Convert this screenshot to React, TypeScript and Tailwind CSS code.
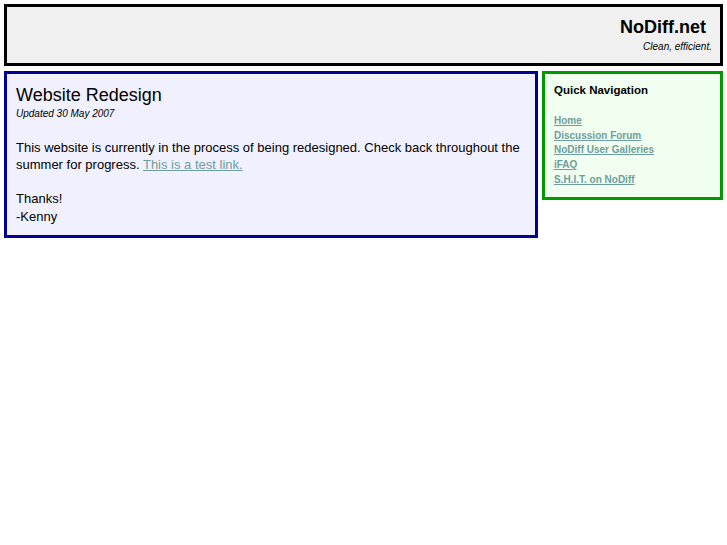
export default function App() {
  return (
    <div className="min-h-screen bg-white p-[4px] text-black" style={{ fontFamily: '"Liberation Sans", Arial, Helvetica, sans-serif' }}>
      <div className="h-[62px] border-[3px] border-black bg-[#f0f0f0] pr-[8px] pt-[10px] text-right">
        <div className="pr-[6px] text-[18px] font-bold leading-[21px]">NoDiff.net</div>
        <div className="mt-[3px] text-[10px] italic leading-[12px]">Clean, efficient.</div>
      </div>
      <div className="mt-[5px] flex items-start gap-[4px]">
        <div className="h-[167px] w-[534px] border-[3px] border-[#000099] bg-[#f0f0ff] px-[9px] pt-[11px]">
          <div className="text-[18px] leading-[21px]">Website Redesign</div>
          <div className="mt-[2px] text-[10px] italic leading-[12px]">Updated 30 May 2007</div>
          <p className="mt-[19px] text-[13px] leading-[17px]">
            This website is currently in the process of being redesigned. Check back throughout the summer for progress.{' '}
            <a href="#" className="text-[#6f9d9d] underline">This is a test link.</a>
          </p>
          <p className="mt-[17px] text-[13px] leading-[17.5px]">
            Thanks!
            <br />
            -Kenny
          </p>
        </div>
        <div className="h-[129px] flex-1 border-[3px] border-[#009900] bg-[#f0fff0] px-[9px] pt-[9px]">
          <div className="text-[11.5px] font-bold leading-[14px]">Quick Navigation</div>
          <div className="mt-[17px] flex flex-col text-[10px] font-bold leading-[14.7px]">
            <a href="#" className="text-[#6f9d9d] underline">Home</a>
            <a href="#" className="text-[#6f9d9d] underline">Discussion Forum</a>
            <a href="#" className="text-[#6f9d9d] underline">NoDiff User Galleries</a>
            <a href="#" className="text-[#6f9d9d] underline">iFAQ</a>
            <a href="#" className="text-[#6f9d9d] underline">S.H.I.T. on NoDiff</a>
          </div>
        </div>
      </div>
    </div>
  );
}
